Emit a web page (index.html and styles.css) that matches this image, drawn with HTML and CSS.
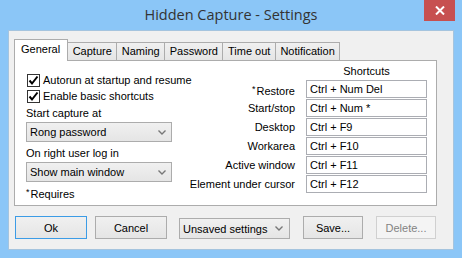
FILE: index.html
```html
<!DOCTYPE html>
<html lang="en">
  <head>
    <meta charset="UTF-8" />
    <title>Hidden Capture - Settings</title>
    <link rel="stylesheet" href="styles.css">
  </head>
  <body>
    <div class="window">
      <div class="titlebar">
        <span></span>
        <div class="title">Hidden Capture - Settings</div>
        <div class="close">
          <svg width="10" height="9" viewBox="0 0 10 9">
            <path d="M1 0.5 L9 8.5 M9 0.5 L1 8.5" stroke="#fff" stroke-width="2" />
          </svg>
        </div>
      </div>

      <div class="client">
        <div class="tabs">
          <div class="tab active">General</div>
          <div class="tab">Capture</div>
          <div class="tab">Naming</div>
          <div class="tab">Password</div>
          <div class="tab">Time out</div>
          <div class="tab">Notification</div>
        </div>

        <div class="pane">
          <div class="left">
            <label class="check">
              <span class="box">
                <svg width="11" height="11" viewBox="0 0 11 11">
                  <path d="M1.5 5.5 L4 8.5 L9.5 1.5" fill="none" stroke="#000" stroke-width="2" />
                </svg>
              </span>
              Autorun at startup and resume
            </label>
            <label class="check">
              <span class="box">
                <svg width="11" height="11" viewBox="0 0 11 11">
                  <path d="M1.5 5.5 L4 8.5 L9.5 1.5" fill="none" stroke="#000" stroke-width="2" />
                </svg>
              </span>
              Enable basic shortcuts
            </label>

            <div class="caption first">Start capture at</div>
            <div class="combo">
              <span>Rong password</span>
              <svg width="8" height="5" viewBox="0 0 8 5">
                <path d="M0.5 0.5 L4 4 L7.5 0.5" fill="none" stroke="#777" stroke-width="1.4" />
              </svg>
            </div>

            <div class="caption">On right user log in</div>
            <div class="combo">
              <span>Show main window</span>
              <svg width="8" height="5" viewBox="0 0 8 5">
                <path d="M0.5 0.5 L4 4 L7.5 0.5" fill="none" stroke="#777" stroke-width="1.4" />
              </svg>
            </div>

            <div class="note"><sup>*</sup>Requires</div>
          </div>

          <div class="shortcuts">
            <span></span>
            <div class="head">Shortcuts</div>

            <div class="label"><sup>*</sup>Restore</div>
            <div class="field">Ctrl + Num Del</div>

            <div class="label">Start/stop</div>
            <div class="field">Ctrl + Num *</div>

            <div class="label">Desktop</div>
            <div class="field">Ctrl + F9</div>

            <div class="label">Workarea</div>
            <div class="field">Ctrl + F10</div>

            <div class="label">Active window</div>
            <div class="field">Ctrl + F11</div>

            <div class="label">Element under cursor</div>
            <div class="field">Ctrl + F12</div>
          </div>
        </div>

        <div class="buttons">
          <div class="btn default">Ok</div>
          <div class="btn">Cancel</div>
          <div class="combo profile">
            <span>Unsaved settings</span>
            <svg width="8" height="5" viewBox="0 0 8 5">
              <path d="M0.5 0.5 L4 4 L7.5 0.5" fill="none" stroke="#777" stroke-width="1.4" />
            </svg>
          </div>
          <div class="btn small">Save...</div>
          <div class="btn small disabled">Delete...</div>
        </div>
      </div>
    </div>
  </body>
</html>
```

FILE: styles.css
```css
* {
  padding: 0;
  margin: 0;
  box-sizing: border-box;
}

body {
  width: 462px;
  height: 258px;
  overflow: hidden;
  background: #8bc6f7;
  font-family: "Liberation Sans", Arial, sans-serif;
  font-size: 11px;
  color: #000;
  white-space: nowrap;
}

.window {
  height: 258px;
  display: flex;
  flex-direction: column;
}

/* title bar */
.titlebar {
  height: 30px;
  display: grid;
  grid-template-columns: 1fr auto 1fr;
  align-items: start;
}

.title {
  padding-top: 5px;
  font-family: "Open Sans", sans-serif;
  font-size: 14.5px;
  color: #333;
}

.close {
  justify-self: end;
  margin-right: 7px;
  width: 31px;
  height: 21px;
  background: #c75050;
  display: flex;
  justify-content: center;
  align-items: center;
}

/* client area */
.client {
  margin: 0 8px;
  height: 220px;
  background: #f0f0f0;
  border: 1px solid #a5c4de;
  padding: 8px 16px 0 5px;
}

.tabs {
  display: flex;
  align-items: flex-end;
  height: 21px;
}

.tab {
  height: 18px;
  padding: 0 4.5px;
  border: 1px solid #acacac;
  border-bottom: none;
  border-left: none;
  background: linear-gradient(#f0f0f0, #e5e5e5);
  line-height: 17px;
}

.tab.active {
  height: 22px;
  margin-bottom: -1px;
  padding: 0 7px 0 6px;
  border-left: 1px solid #acacac;
  background: #fff;
  line-height: 18px;
  position: relative;
}

.pane {
  height: 146px;
  background: #fff;
  border: 1px solid #acacac;
  display: flex;
  justify-content: space-between;
}

.left {
  width: 157px;
  padding: 11px 0 0 11px;
  display: flex;
  flex-direction: column;
}

.check {
  height: 16px;
  display: flex;
  align-items: center;
  gap: 3px;
  margin-left: 1px;
}

.box {
  width: 13px;
  height: 13px;
  border: 1px solid #333;
  background: #fff;
  display: flex;
  justify-content: center;
  align-items: center;
}

.caption {
  height: 17px;
  line-height: 16px;
  margin-top: 3px;
}

.caption.first {
  margin-top: 1px;
}

.combo {
  height: 20px;
  border: 1px solid #acacac;
  background: linear-gradient(#f0f0f0, #e5e5e5);
  display: flex;
  justify-content: space-between;
  align-items: center;
  padding: 0 5px 0 3px;
}

.note {
  margin-top: 5px;
}

sup {
  font-size: 9px;
  vertical-align: 3px;
  margin-right: 1px;
}

.shortcuts {
  padding: 3px 9px 0 0;
  display: grid;
  grid-template-columns: auto 121px;
  grid-auto-rows: 18px;
  grid-template-rows: 15px;
  column-gap: 11px;
  row-gap: 1px;
  align-content: start;
}

.head {
  text-align: center;
  line-height: 15px;
}

.label {
  text-align: right;
  line-height: 18px;
}

.field {
  border: 1px solid #abadb3;
  padding-left: 3px;
  line-height: 16px;
}

/* bottom buttons */
.buttons {
  display: flex;
  align-items: flex-end;
  height: 23px;
  margin-top: 10px;
  padding-left: 1px;
}

.buttons > * {
  flex-shrink: 0;
}

.btn {
  width: 72px;
  height: 23px;
  border: 1px solid #acacac;
  background: linear-gradient(#f0f0f0, #e5e5e5);
  display: flex;
  justify-content: center;
  align-items: center;
  margin-right: 8px;
}

.btn.default {
  border-color: #3c9ce6;
}

.btn.small {
  width: 60px;
  margin-right: 13px;
}

.btn.small:last-child {
  margin-right: 0;
}

.btn.disabled {
  color: #838383;
  border-color: #d0d0d0;
  background: #f4f4f4;
}

.combo.profile {
  width: 111px;
  height: 21px;
  margin: 0 13px 0 4px;
  padding-right: 6px;
}
```
